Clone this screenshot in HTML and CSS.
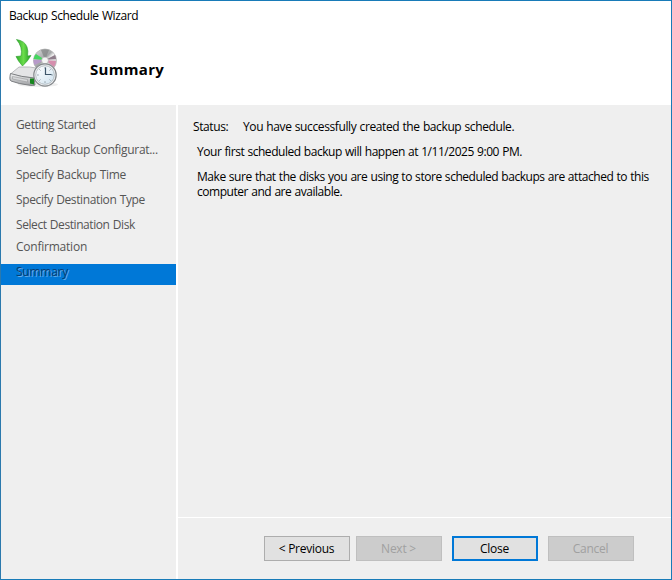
FILE: index.html
```
<!DOCTYPE html>
<html lang="en">
<head>
<meta charset="utf-8">
<title>Backup Schedule Wizard</title>
<link rel="stylesheet" href="styles.css">
</head>
<body>
<main class="window">
  <header class="header">
    <div class="titlebar"><span>Backup Schedule Wizard</span></div>
    <div class="heading">
      <svg class="logo" viewBox="0 0 52 52" aria-hidden="true">
        <defs>
          <linearGradient id="arrow" x1="0" y1="0" x2="1" y2="0"><stop offset="0" stop-color="#2fae2a"/><stop offset=".5" stop-color="#6bdc4b"/><stop offset="1" stop-color="#1f9d22"/></linearGradient>
          <linearGradient id="disc" x1="0" y1="0" x2="1" y2="1"><stop offset="0" stop-color="#dcdddd"/><stop offset=".45" stop-color="#a3a6a7"/><stop offset=".55" stop-color="#efefef"/><stop offset="1" stop-color="#aaa"/></linearGradient>
          <linearGradient id="drive" x1="0" y1="0" x2="0" y2="1"><stop offset="0" stop-color="#f4f4f5"/><stop offset="1" stop-color="#9b9da0"/></linearGradient>
          <linearGradient id="dial" x1="0" y1="0" x2="1" y2="1"><stop offset="0" stop-color="#fff"/><stop offset="1" stop-color="#cfe2ef"/></linearGradient>
        </defs>
        <ellipse cx="30" cy="46.5" rx="20" ry="2.5" fill="#eee"/>
        <circle cx="37" cy="22.500" r="11.500" fill="url(#disc)" stroke="#b0b0b0" stroke-width=".7"/>
        <path d="m37 22-9-6q-2 2-2.500 5z" fill="#45d65f"/>
        <path d="m37 22-11.500 0q0 3 1 5z" fill="#b79ac9"/>
        <path d="m37 22 11 1q0 3-2 6z" fill="#d68fae"/>
        <path d="m37 22 10-5q1 2 1 4z" fill="#8f7d8b"/>
        <path d="m37 22-4-10q4-1.500 8 0z" fill="#818485" opacity=".7"/>
        <circle cx="37" cy="22.500" r="3.400" fill="#f5f5f5" stroke="#aaa" stroke-width=".6"/>
        <path d="M2.500 36 11 29q10-1 23 2l-8 9q-12-1-23.500-4z" fill="#e4e4e6" stroke="#a4a5a7" stroke-width=".7"/>
        <path d="M2.500 35.500Q13 39 26 40l1 7q-2 1-7 0-9-1-17-4-2-1-.5-7.500z" fill="url(#drive)" stroke="#737578" stroke-width=".9"/>
        <path d="m4.500 38.500 15 3v2.500l-15-3z" fill="#d7d8da" stroke="#8f9193" stroke-width=".5"/>
        <path d="m22 40.500 4 0v6l-4-1z" fill="#16861d"/>
        <path d="M8.500 1.500Q17 3 19 9q1.500 4 .5 9l3.500-.5Q20 23 14.500 28 10 23 8 18.500l5-.5Q15 9 8.500 1.500z" fill="url(#arrow)" stroke="#2a9a2a" stroke-width=".6" stroke-linejoin="round"/>
        <circle cx="37" cy="37" r="11.200" fill="#eef0f2" stroke="#85898c" stroke-width="1.200"/>
        <circle cx="37" cy="37" r="9.300" fill="url(#dial)" stroke="#aab2b8" stroke-width=".8"/>
        <path d="M37 29v1.800M37 43.200v1.800M29 37h1.800M43.200 37h1.800M31.300 31.300l1.200 1.200M42.700 31.300l-1.200 1.200M31.300 42.700l1.200-1.200M42.700 42.700l-1.200-1.200" stroke="#84929b" stroke-width=".8"/>
        <path d="M37.500 29.500v7h6" fill="none" stroke="#3d5569" stroke-width="1.200"/>
      </svg>
      <h1>Summary</h1>
    </div>
  </header>
  <div class="body">
    <nav class="steps">
      <div class="step s1">Getting Started</div>
      <div class="step s2">Select Backup Configurat...</div>
      <div class="step s3">Specify Backup Time</div>
      <div class="step s4">Specify Destination Type</div>
      <div class="step s5">Select Destination Disk</div>
      <div class="step s6">Confirmation</div>
      <div class="step current">Summary</div>
    </nav>
    <section class="panel">
      <div class="content">
        <p class="status"><span class="label">Status:</span><span class="result">You have successfully created the backup schedule.</span></p>
        <p class="next-run">Your first scheduled backup will happen at 1/11/2025 9:00 PM.</p>
        <p class="note">Make sure that the disks you are using to store scheduled backups are attached to this<br>computer and are available.</p>
      </div>
      <footer class="actions">
        <button class="prev">&lt; Previous</button>
        <button class="next" disabled>Next &gt;</button>
        <button class="close">Close</button>
        <button class="cancel" disabled>Cancel</button>
      </footer>
    </section>
  </div>
</main>
</body>
</html>
```
FILE: styles.css
```
* { box-sizing: border-box; }
body { margin: 0; font: 12px/15px "Open Sans", "Noto Sans", sans-serif; word-spacing: .5px; color: #000; }
.window { width: 672px; height: 580px; border: 1px solid #187bb8; border-left-color: #2b79ad; background: #efefef; display: flex; flex-direction: column; }
.header { height: 104px; background: #fff; }
.titlebar { height: 37px; padding: 7px 8px; letter-spacing: -.4px; white-space: nowrap; }
.heading { display: flex; }
.logo { width: 52px; height: 52px; margin-left: 7px; }
h1 { margin: 21px 0 0 30px; font: 700 15px/20px "Open Sans", sans-serif; letter-spacing: .3px; }
.body { flex: 1; display: flex; min-height: 0; }
.steps { flex: none; width: 177px; border-right: 2px solid #fff; padding-top: 12px; color: #555; }
.step { height: 25px; padding-left: 15px; white-space: nowrap; }
.s1 { letter-spacing: -.4px; }
.s2 { letter-spacing: -.3px; }
.s3 { letter-spacing: -.28px; }
.s4 { letter-spacing: -.37px; }
.s5 { height: 22px; letter-spacing: -.42px; }
.s6 { letter-spacing: -.23px; }
.current { width: 175px; height: 21px; background: #0078d7; color: #073b72; line-height: 15px; letter-spacing: -.25px; text-shadow: 1px 1px 0 #65aee8; }
.panel { flex: 1; min-width: 0; display: flex; flex-direction: column; }
.content { flex: 1; padding: 14px 0 0 15px; }
p { margin: 0; white-space: nowrap; }
.status { display: flex; height: 25px; letter-spacing: -.39px; }
.label { width: 50px; }
.next-run, .note { padding-left: 4px; letter-spacing: -.455px; }
.next-run { height: 25px; }
.actions { height: 62px; border-top: 1px solid #fff; padding: 18px 37px 0 0; display: flex; justify-content: flex-end; }
button { width: 86px; height: 25px; padding: 0 1px 0 0; border: 1px solid #adadad; background: #e1e1e1; color: #000; font: inherit; letter-spacing: -.25px; }
button:disabled { background: #ccc; border-color: #bfbfbf; color: #a0a0a0; }
.next { margin-left: 6px; }
.close { margin-left: 10px; border: 2px solid #0078d7; }
.cancel { margin-left: 10px; }
```
